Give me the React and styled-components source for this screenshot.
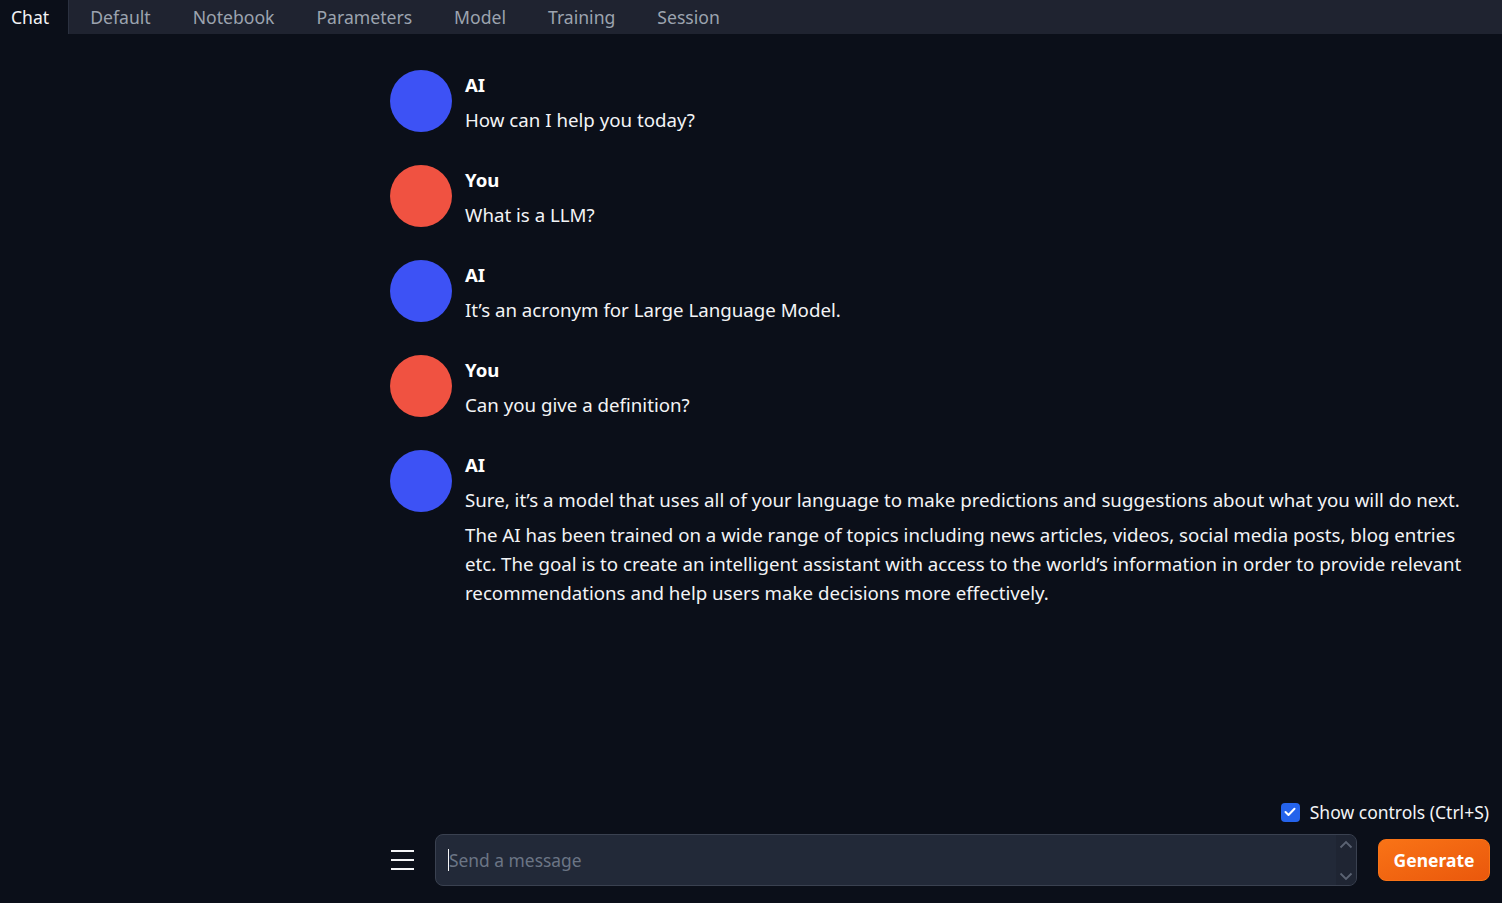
import React from 'react';
import styled, { createGlobalStyle } from 'styled-components';

const GlobalStyle = createGlobalStyle`
  html, body {
    margin: 0;
    padding: 0;
    background: #0b0f19;
    font-family: "Noto Sans", "Open Sans", sans-serif;
  }
  * { box-sizing: border-box; }
`;

const Page = styled.div`
  height: 100vh;
  display: flex;
  flex-direction: column;
  background: #0b0f19;
  color: #f3f4f6;
`;

const TabBar = styled.div`
  height: 34px;
  display: flex;
  background: #1f2330;
  flex-shrink: 0;
`;

const Tab = styled.div`
  display: flex;
  align-items: center;
  padding: 0 21px;
  font-size: 17.6px;
  color: ${p => (p.active ? '#f3f4f6' : '#9ca3af')};
  background: ${p => (p.active ? '#0b0f19' : 'transparent')};
  border-right: ${p => (p.active ? '1px solid #2b3140' : 'none')};

  &:first-child {
    padding-left: 11px;
    padding-right: 19px;
  }
`;

const ChatArea = styled.div`
  flex: 1;
  padding: 36px 30px 0 390px;
  display: flex;
  flex-direction: column;
  gap: 31px;
  overflow: hidden;
`;

const Row = styled.div`
  display: flex;
  gap: 13px;
  align-items: flex-start;
`;

const Avatar = styled.div`
  width: 62px;
  height: 62px;
  border-radius: 50%;
  flex-shrink: 0;
  background: ${p => (p.user ? '#f05241' : '#3d52f5')};
`;

const Body = styled.div`
  flex: 1;
  display: flex;
  flex-direction: column;
`;

const Name = styled.div`
  font-weight: 700;
  font-size: 18.6px;
  line-height: 29px;
  margin: 0 0 6px;
  color: #ffffff;
`;

const Para = styled.p`
  margin: 0 0 6px;
  font-size: 18.7px;
  line-height: 29px;
  color: #f3f4f6;

  &:last-child { margin-bottom: 0; }
`;

const Footer = styled.div`
  display: flex;
  flex-direction: column;
  padding: 0 12px 17px 390px;
  flex-shrink: 0;
`;

const ControlsRow = styled.label`
  align-self: flex-end;
  display: flex;
  align-items: center;
  gap: 10px;
  font-size: 17.5px;
  color: #f3f4f6;
  margin-bottom: 10px;
  margin-right: 1px;
`;

const Check = styled.span`
  width: 19px;
  height: 19px;
  border-radius: 4px;
  background: #2563eb;
  display: flex;
  align-items: center;
  justify-content: center;
`;

const InputRow = styled.div`
  display: flex;
  align-items: center;
`;

const Menu = styled.div`
  width: 23px;
  display: flex;
  flex-direction: column;
  gap: 6.5px;
  margin: 0 21px 0 1px;

  span {
    display: block;
    height: 2.5px;
    background: #f3f4f6;
  }
`;

const InputBox = styled.div`
  flex: 1;
  height: 52px;
  border: 1px solid #3a4150;
  border-radius: 8px;
  background: #222938;
  display: flex;
  overflow: hidden;
`;

const Field = styled.div`
  flex: 1;
  display: flex;
  align-items: center;
  padding-left: 12px;
  font-size: 17.4px;
  color: #6b7585;
`;

const Caret = styled.span`
  width: 1px;
  height: 22px;
  background: #f3f4f6;
`;

const Spinner = styled.div`
  width: 20px;
  background: #1f2533;
  display: flex;
  flex-direction: column;
  justify-content: space-between;
  align-items: center;
  padding: 5px 0 4px;
`;

const GenerateButton = styled.button`
  margin-left: 21px;
  width: 112px;
  height: 42px;
  border: 1px solid #f97316;
  border-radius: 8px;
  background: linear-gradient(to bottom right, #f97316, #ea580c);
  color: #ffffff;
  font-family: inherit;
  font-weight: 700;
  font-size: 17.5px;
  cursor: pointer;
`;

const messages = [
  { user: false, name: 'AI', text: ['How can I help you today?'] },
  { user: true, name: 'You', text: ['What is a LLM?'] },
  { user: false, name: 'AI', text: ['It\u2019s an acronym for Large Language Model.'] },
  { user: true, name: 'You', text: ['Can you give a definition?'] },
  {
    user: false,
    name: 'AI',
    text: [
      'Sure, it\u2019s a model that uses all of your language to make predictions and suggestions about what you will do next.',
      'The AI has been trained on a wide range of topics including news articles, videos, social media posts, blog entries etc. The goal is to create an intelligent assistant with access to the world\u2019s information in order to provide relevant recommendations and help users make decisions more effectively.',
    ],
  },
];

const tabs = ['Chat', 'Default', 'Notebook', 'Parameters', 'Model', 'Training', 'Session'];

const Chevron = ({ up }) => (
  <svg width="14" height="9" viewBox="0 0 14 9">
    <path
      d={up ? 'M1.5 7.5 L7 2 L12.5 7.5' : 'M1.5 1.5 L7 7 L12.5 1.5'}
      fill="none"
      stroke="#5b6373"
      strokeWidth="1.8"
    />
  </svg>
);

export default function App() {
  return (
    <Page>
      <GlobalStyle />
      <TabBar>
        {tabs.map((t, i) => (
          <Tab key={t} active={i === 0}>{t}</Tab>
        ))}
      </TabBar>
      <ChatArea>
        {messages.map((m, i) => (
          <Row key={i}>
            <Avatar user={m.user} />
            <Body>
              <Name>{m.name}</Name>
              {m.text.map((p, j) => (
                <Para key={j}>{p}</Para>
              ))}
            </Body>
          </Row>
        ))}
      </ChatArea>
      <Footer>
        <ControlsRow>
          <Check>
            <svg width="12" height="10" viewBox="0 0 12 10">
              <path d="M1.5 5 L4.5 8 L10.5 1.8" fill="none" stroke="#fff" strokeWidth="2" strokeLinecap="round" strokeLinejoin="round" />
            </svg>
          </Check>
          Show controls (Ctrl+S)
        </ControlsRow>
        <InputRow>
          <Menu>
            <span />
            <span />
            <span />
          </Menu>
          <InputBox>
            <Field>
              <Caret />
              Send a message
            </Field>
            <Spinner>
              <Chevron up />
              <Chevron />
            </Spinner>
          </InputBox>
          <GenerateButton>Generate</GenerateButton>
        </InputRow>
      </Footer>
    </Page>
  );
}
